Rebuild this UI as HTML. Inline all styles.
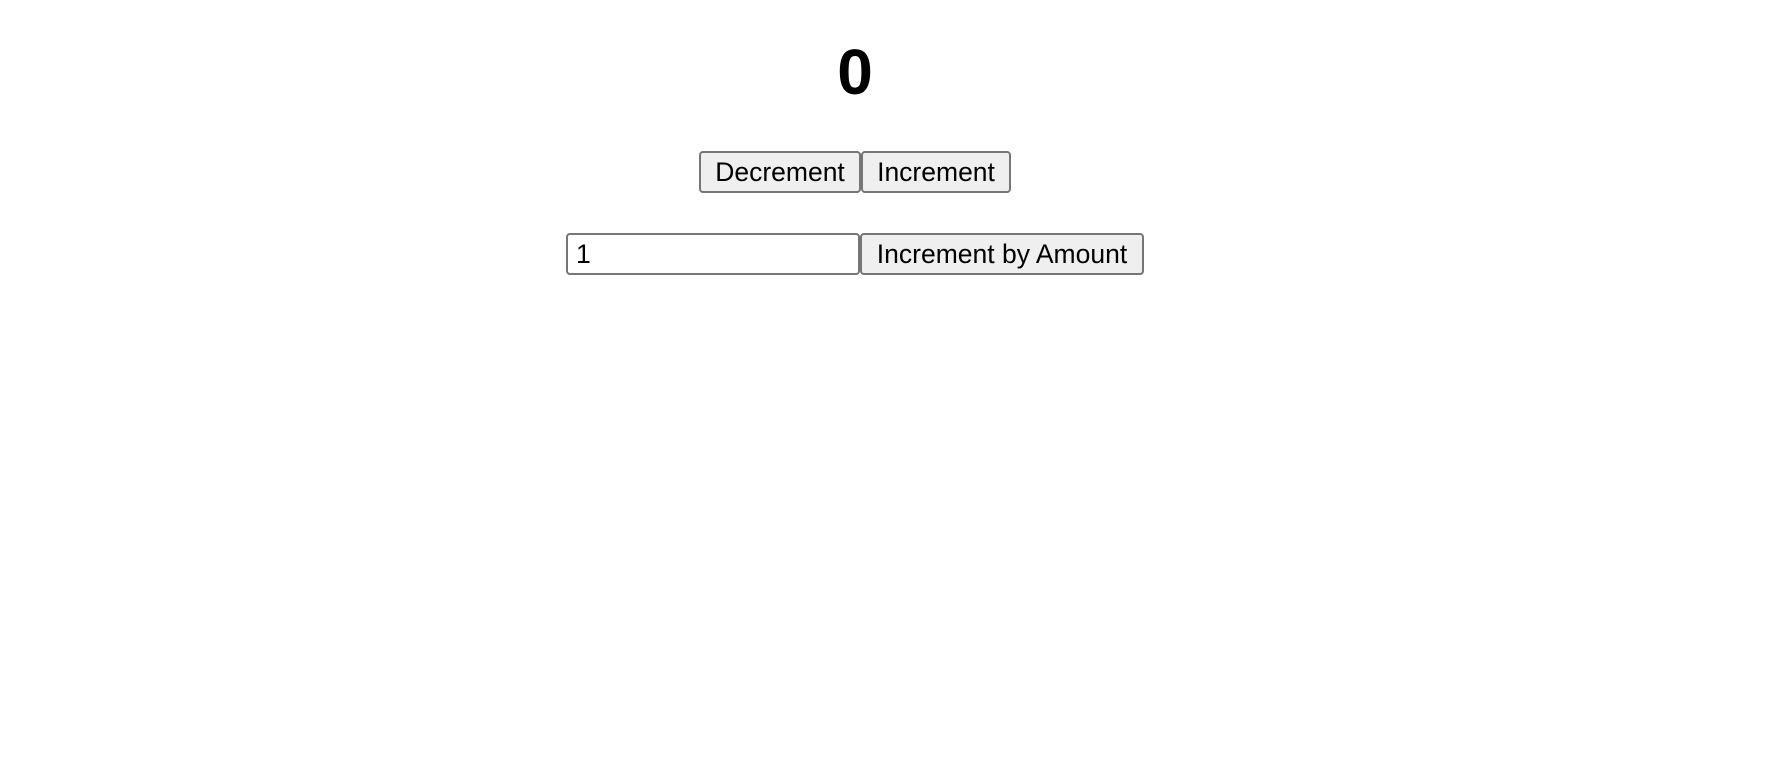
<!DOCTYPE html>
<html><head><style>
body{margin:0;width:1792px;height:784px;background:#fff;font-family:"Liberation Sans",Arial,sans-serif;position:relative;overflow:hidden}
.z{position:absolute;left:755px;width:200px;text-align:center;top:27px;font-size:64px;font-weight:bold;line-height:90px}
.b{position:absolute;box-sizing:border-box;border:2px solid #767676;border-radius:4px;background:#efefef;font-size:26.5px;line-height:38px;text-align:center;color:#000}
.i{background:#fff;text-align:left;padding-left:8px}
</style></head><body>
<div class="z">0</div>
<div class="b" style="left:699px;top:151px;width:162px;height:42px">Decrement</div>
<div class="b" style="left:861px;top:151px;width:150px;height:42px">Increment</div>
<div class="b i" style="left:566px;top:233px;width:294px;height:42px">1</div>
<div class="b" style="left:860px;top:233px;width:284px;height:42px">Increment by Amount</div>
</body></html>
